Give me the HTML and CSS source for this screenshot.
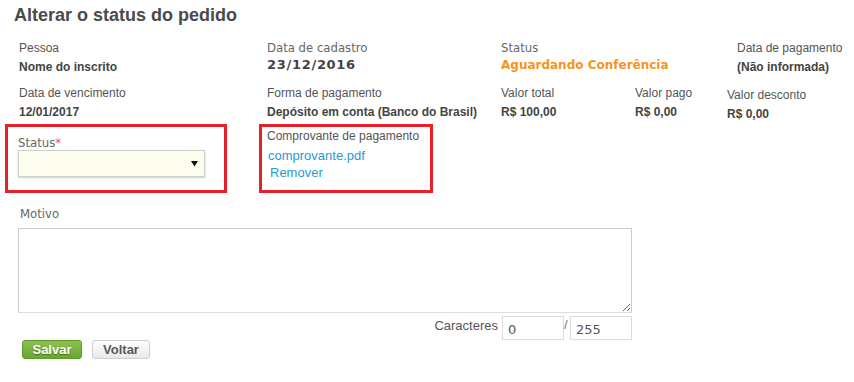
FILE: index.html
```html
<!DOCTYPE html>
<html lang="pt-BR">
<head>
  <meta charset="UTF-8">
  <meta name="viewport" content="width=device-width, initial-scale=1.0">
  <title>Alterar o status do pedido</title>
  <link rel="stylesheet" href="styles.css">
</head>
<body>
  <div class="page">
    <h1 class="title">Alterar o status do pedido</h1>

    <div class="info-row row-top">
      <div class="field col-a">
        <div class="label">Pessoa</div>
        <div class="value">Nome do inscrito</div>
      </div>
      <div class="field col-b">
        <div class="label verdana">Data de cadastro</div>
        <div class="value date">23/12/2016</div>
      </div>
      <div class="field col-c">
        <div class="label verdana">Status</div>
        <div class="value status">Aguardando Conferência</div>
      </div>
      <div class="field">
        <div class="label">Data de pagamento</div>
        <div class="value">(Não informada)</div>
      </div>
    </div>

    <div class="info-row row-bottom">
      <div class="field col-a">
        <div class="label">Data de vencimento</div>
        <div class="value">12/01/2017</div>
      </div>
      <div class="field col-b">
        <div class="label">Forma de pagamento</div>
        <div class="value">Depósito em conta (Banco do Brasil)</div>
      </div>
      <div class="field col-total">
        <div class="label">Valor total</div>
        <div class="value">R$ 100,00</div>
      </div>
      <div class="field col-pago">
        <div class="label">Valor pago</div>
        <div class="value">R$ 0,00</div>
      </div>
      <div class="field col-desconto">
        <div class="label">Valor desconto</div>
        <div class="value">R$ 0,00</div>
      </div>
    </div>

    <div class="edit-row">
      <div class="edit-box status-box">
        <div class="label verdana">Status<span class="required">*</span></div>
        <div class="select-box">
          <svg class="select-arrow" width="7" height="7" viewBox="0 0 7 7"><path d="M0 1 L7 1 L3.5 6.5 Z" fill="#111"/></svg>
        </div>
      </div>
      <div class="edit-box file-box">
        <div class="label">Comprovante de pagamento</div>
        <a class="link file-link" href="#">comprovante.pdf</a>
        <a class="link remove-link" href="#">Remover</a>
      </div>
    </div>

    <div class="motivo">
      <div class="label verdana motivo-label">Motivo</div>
      <textarea class="motivo-text"></textarea>
      <div class="counter">
        <span class="counter-label">Caracteres</span>
        <input class="counter-input" type="text" value="0">
        <span class="counter-sep">/</span>
        <input class="counter-input" type="text" value="255">
      </div>
    </div>

    <div class="actions">
      <button class="btn btn-save">Salvar</button>
      <button class="btn btn-back">Voltar</button>
    </div>
  </div>
</body>
</html>
```

FILE: styles.css
```css
* {
  margin: 0;
  padding: 0;
  box-sizing: border-box;
}

body {
  font-family: 'Liberation Sans', Arial, sans-serif;
  background-color: #fff;
  color: #555;
  font-size: 12px;
}

.page {
  padding: 5px 0 0 5px;
}

.title {
  margin-left: 9px;
  font-size: 18px;
  line-height: 21px;
  font-weight: bold;
  color: #4a4a4a;
}

.info-row {
  display: flex;
  padding-left: 14px;
}

.row-top {
  margin-top: 15px;
}

.row-bottom {
  margin-top: 11px;
}

.col-a {
  width: 248px;
}

.col-b {
  width: 234px;
}

.col-c {
  width: 236px;
}

.col-total {
  width: 134px;
}

.col-pago {
  width: 92px;
}

.col-desconto {
  margin-top: 2px;
}

.label {
  line-height: 15px;
  color: #555;
}

.verdana {
  font-family: 'DejaVu Sans', Verdana, sans-serif;
  font-size: 11.7px;
  color: #666;
}

.value {
  margin-top: 4px;
  line-height: 15px;
  font-weight: bold;
  color: #444;
}

.date {
  margin-top: 1px;
  font-family: 'DejaVu Sans', Verdana, sans-serif;
  font-size: 13px;
  line-height: 16px;
  letter-spacing: 0.7px;
}

.status {
  margin-top: 1px;
  font-family: 'DejaVu Sans', Verdana, sans-serif;
  font-size: 12px;
  line-height: 16px;
  color: #f7941e;
}

.edit-row {
  display: flex;
  gap: 32px;
  margin-top: 2px;
}

.edit-box {
  height: 69px;
  border: 3px solid #e8202a;
}

.status-box {
  width: 222px;
  padding: 9px 0 0 10px;
}

.required {
  color: #f0564f;
}

.select-box {
  width: 187px;
  height: 27px;
  margin-top: -1px;
  background-color: #fefeee;
  border: 1px solid #cfcfcf;
  box-shadow: 0 1px 2px rgba(0, 0, 0, 0.2);
  display: flex;
  align-items: center;
  justify-content: flex-end;
  padding-right: 6px;
}

.file-box {
  width: 174px;
  padding: 2px 0 0 5px;
}

.link {
  display: block;
  color: #2b98d3;
  text-decoration: none;
  font-size: 13px;
  line-height: 16px;
}

.file-link {
  margin-top: 4px;
  margin-left: 1px;
}

.remove-link {
  margin-top: 1px;
  margin-left: 3px;
}

.motivo {
  width: 627px;
  padding-left: 13px;
  margin-top: 14px;
}

.motivo-label {
  padding-left: 2px;
}

.motivo-text {
  display: block;
  width: 614px;
  height: 85px;
  margin-top: 6px;
  border: 1px solid #ccc;
  border-bottom-color: #ddd;
  font-family: 'DejaVu Sans', Verdana, sans-serif;
  font-size: 12px;
}

.counter {
  display: flex;
  justify-content: flex-end;
  align-items: flex-start;
  margin-top: 3px;
}

.counter-label {
  font-size: 13px;
  line-height: 16px;
  margin-top: 2px;
  margin-right: 4px;
  color: #555;
}

.counter-input {
  width: 62px;
  height: 24px;
  border: 1px solid #ddd;
  padding: 2px 5px 0;
  font-family: 'DejaVu Sans', Verdana, sans-serif;
  font-size: 13px;
  color: #555;
}

.counter-sep {
  width: 6px;
  font-size: 13px;
  line-height: 16px;
  margin-top: 1px;
  color: #777;
}

.actions {
  display: flex;
  gap: 10px;
  margin-left: 17px;
}

.btn {
  height: 19px;
  font-family: 'Liberation Sans', Arial, sans-serif;
  font-size: 13px;
  font-weight: bold;
  border-radius: 3px;
  cursor: pointer;
}

.btn-save {
  width: 60px;
  color: #fff;
  background: linear-gradient(#8cc152, #6aa632);
  border: 1px solid #5e9a2c;
  text-shadow: 0 1px 1px rgba(0, 0, 0, 0.35);
}

.btn-back {
  width: 58px;
  color: #5a5a5a;
  background: linear-gradient(#ffffff, #e8e8e8);
  border: 1px solid #cfcfcf;
}
```
